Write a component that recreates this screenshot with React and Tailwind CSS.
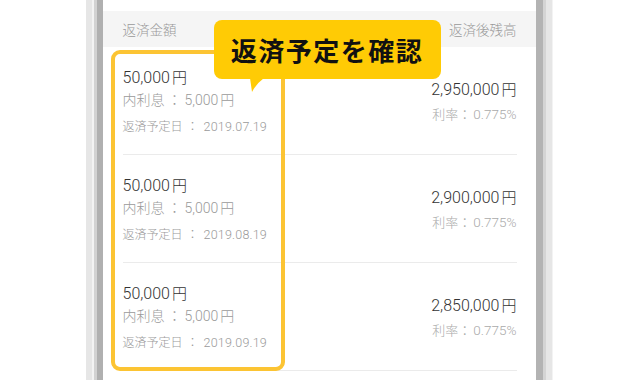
import React from "react";

const rows = [
  { amount: "50,000", interest: "5,000", date: "2019.07.19", balance: "2,950,000", rate: "0.775%" },
  { amount: "50,000", interest: "5,000", date: "2019.08.19", balance: "2,900,000", rate: "0.775%" },
  { amount: "50,000", interest: "5,000", date: "2019.09.19", balance: "2,850,000", rate: "0.775%" },
];

const Row = ({ item }) => (
  <div className="flex justify-between items-center border-b border-[#ebebeb] pt-[20px] pb-[17px]">
    <div>
      <div className="h-[22px] leading-[22px] text-[16px] text-[#333]">
        {item.amount}
        <span className="ml-[2px] text-[15px]">円</span>
      </div>
      <div className="h-[22px] leading-[22px] text-[14px] text-[#9a9a9a]">
        内利息
        <span className="mx-[3px]">：</span>
        {item.interest}
        <span className="ml-[2px]">円</span>
      </div>
      <div className="mt-[6px] h-[20px] leading-[20px] text-[12px] text-[#9a9a9a]">
        返済予定日
        <span className="ml-[4px] mr-[5px]">：</span>
        <span className="text-[12.5px] tracking-[0.2px]">{item.date}</span>
      </div>
    </div>
    <div className="text-right">
      <div className="h-[22px] leading-[22px] text-[16px] text-[#333]">
        {item.balance}
        <span className="ml-[2px] text-[15px]">円</span>
      </div>
      <div className="mt-[2px] h-[22px] leading-[22px] text-[13px] text-[#aaa]">
        利率
        <span className="mr-[2px]">：</span>
        <span className="text-[13.5px]">{item.rate}</span>
      </div>
    </div>
  </div>
);

export default function App() {
  return (
    <div className="w-[638px] h-[380px] bg-white overflow-hidden flex justify-center font-light font-['Roboto','Noto_Sans_CJK_JP',sans-serif]">
      {/* Left frame */}
      <div className="flex h-full">
        <div className="w-[6px] bg-[#e6e6e6]" />
        <div className="w-[2px] bg-[#f3f3f3]" />
        <div className="w-[3px] bg-[#d2d2d2]" />
        <div className="w-[6px] bg-[#b0b0b0]" />
      </div>

      {/* Screen */}
      <div className="relative w-[433px] h-full bg-white">
        <div className="h-[11px]" />
        <div className="h-[36px] bg-[#f5f5f5] pl-[20px] pr-[19px] pt-[2px] flex justify-between items-center text-[13.5px] text-[#999]">
          <span>返済金額</span>
          <span>返済後残高</span>
        </div>
        <div className="pl-[20px] pr-[19px]">
          {rows.map((item, i) => (
            <Row key={i} item={item} />
          ))}
        </div>

        {/* Highlight box */}
        <div className="absolute left-[8px] top-[50px] w-[174px] h-[321px] border-[4px] border-[#fcc433] rounded-[9px]" />

        {/* Callout */}
        <div className="absolute left-[111px] top-[20px] w-[227px] h-[59px] bg-[#ffcb05] rounded-[8px] flex items-center justify-center">
          <span className="text-[26px] font-bold tracking-[1.5px] text-[#111] font-['Noto_Sans_CJK_JP',sans-serif]">
            返済予定を確認
          </span>
          <svg className="absolute left-[36px] top-[58px]" width="16" height="16" viewBox="0 0 16 16">
            <path d="M0 0 L14 0 Q6 6 2 14 Q1 7 0 0 Z" fill="#ffcb05" />
          </svg>
        </div>
      </div>

      {/* Right frame */}
      <div className="flex h-full">
        <div className="w-[7px] bg-[#b3b3b3]" />
        <div className="w-[3px] bg-[#d4d4d4]" />
        <div className="w-[6px] bg-[#e6e6e6]" />
        <div className="w-[1px] bg-[#f3f3f3]" />
      </div>
    </div>
  );
}
